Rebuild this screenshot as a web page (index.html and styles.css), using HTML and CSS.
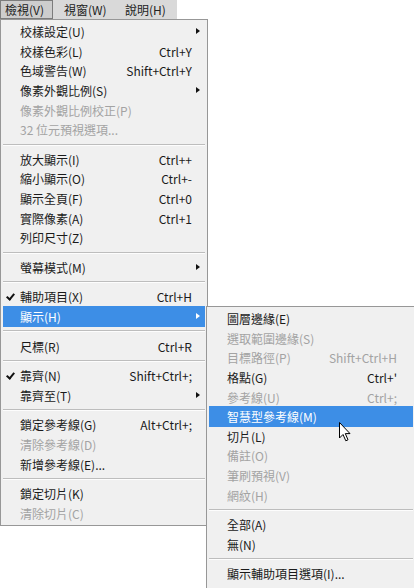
FILE: index.html
```html
<!DOCTYPE html>
<html>
<head>
  <title>檢視選單</title>
  <link rel="stylesheet" href="styles.css">
</head>
<body>
  <div class="menubar">
    <div class="bar-item active">檢視(V)</div>
    <div class="bar-item">視窗(W)</div>
    <div class="bar-item">說明(H)</div>
  </div>

  <div class="menu main-menu">
    <div class="row"><span class="mark"></span><span class="label">校樣設定(U)</span><span class="key"></span><span class="arrow"></span></div>
    <div class="row"><span class="mark"></span><span class="label">校樣色彩(L)</span><span class="key">Ctrl+Y</span><span class="arrow none"></span></div>
    <div class="row"><span class="mark"></span><span class="label">色域警告(W)</span><span class="key">Shift+Ctrl+Y</span><span class="arrow none"></span></div>
    <div class="row"><span class="mark"></span><span class="label">像素外觀比例(S)</span><span class="key"></span><span class="arrow"></span></div>
    <div class="row disabled"><span class="mark"></span><span class="label">像素外觀比例校正(P)</span><span class="key"></span><span class="arrow none"></span></div>
    <div class="row disabled"><span class="mark"></span><span class="label">32 位元預視選項...</span><span class="key"></span><span class="arrow none"></span></div>
    <div class="sep"></div>
    <div class="row"><span class="mark"></span><span class="label">放大顯示(I)</span><span class="key">Ctrl++</span><span class="arrow none"></span></div>
    <div class="row"><span class="mark"></span><span class="label">縮小顯示(O)</span><span class="key">Ctrl+-</span><span class="arrow none"></span></div>
    <div class="row"><span class="mark"></span><span class="label">顯示全頁(F)</span><span class="key">Ctrl+0</span><span class="arrow none"></span></div>
    <div class="row"><span class="mark"></span><span class="label">實際像素(A)</span><span class="key">Ctrl+1</span><span class="arrow none"></span></div>
    <div class="row"><span class="mark"></span><span class="label">列印尺寸(Z)</span><span class="key"></span><span class="arrow none"></span></div>
    <div class="sep"></div>
    <div class="row"><span class="mark"></span><span class="label">螢幕模式(M)</span><span class="key"></span><span class="arrow"></span></div>
    <div class="sep"></div>
    <div class="row"><span class="mark checked"></span><span class="label">輔助項目(X)</span><span class="key">Ctrl+H</span><span class="arrow none"></span></div>
    <div class="row hover"><span class="mark"></span><span class="label">顯示(H)</span><span class="key"></span><span class="arrow"></span></div>
    <div class="sep"></div>
    <div class="row"><span class="mark"></span><span class="label">尺標(R)</span><span class="key">Ctrl+R</span><span class="arrow none"></span></div>
    <div class="sep"></div>
    <div class="row"><span class="mark checked"></span><span class="label">靠齊(N)</span><span class="key">Shift+Ctrl+;</span><span class="arrow none"></span></div>
    <div class="row"><span class="mark"></span><span class="label">靠齊至(T)</span><span class="key"></span><span class="arrow"></span></div>
    <div class="sep"></div>
    <div class="row"><span class="mark"></span><span class="label">鎖定參考線(G)</span><span class="key">Alt+Ctrl+;</span><span class="arrow none"></span></div>
    <div class="row disabled"><span class="mark"></span><span class="label">清除參考線(D)</span><span class="key"></span><span class="arrow none"></span></div>
    <div class="row"><span class="mark"></span><span class="label">新增參考線(E)...</span><span class="key"></span><span class="arrow none"></span></div>
    <div class="sep"></div>
    <div class="row"><span class="mark"></span><span class="label">鎖定切片(K)</span><span class="key"></span><span class="arrow none"></span></div>
    <div class="row disabled"><span class="mark"></span><span class="label">清除切片(C)</span><span class="key"></span><span class="arrow none"></span></div>
  </div>

  <div class="menu sub-menu">
    <div class="row"><span class="mark"></span><span class="label">圖層邊緣(E)</span><span class="key"></span></div>
    <div class="row disabled"><span class="mark"></span><span class="label">選取範圍邊緣(S)</span><span class="key"></span></div>
    <div class="row disabled"><span class="mark"></span><span class="label">目標路徑(P)</span><span class="key">Shift+Ctrl+H</span></div>
    <div class="row"><span class="mark"></span><span class="label">格點(G)</span><span class="key">Ctrl+'</span></div>
    <div class="row disabled"><span class="mark"></span><span class="label">參考線(U)</span><span class="key">Ctrl+;</span></div>
    <div class="row hover"><span class="mark"></span><span class="label">智慧型參考線(M)</span><span class="key"></span></div>
    <div class="row"><span class="mark"></span><span class="label">切片(L)</span><span class="key"></span></div>
    <div class="row disabled"><span class="mark"></span><span class="label">備註(O)</span><span class="key"></span></div>
    <div class="row disabled"><span class="mark"></span><span class="label">筆刷預視(V)</span><span class="key"></span></div>
    <div class="row disabled"><span class="mark"></span><span class="label">網紋(H)</span><span class="key"></span></div>
    <div class="sep"></div>
    <div class="row"><span class="mark"></span><span class="label">全部(A)</span><span class="key"></span></div>
    <div class="row"><span class="mark"></span><span class="label">無(N)</span><span class="key"></span></div>
    <div class="sep"></div>
    <div class="row"><span class="mark"></span><span class="label">顯示輔助項目選項(I)...</span><span class="key"></span></div>
  </div>

  <svg class="cursor" width="14" height="22" viewBox="0 0 14 22">
    <path d="M1.5 1.5 L1.5 17 L5 13.5 L7.8 19.8 L10 18.8 L7.3 12.6 L12 12.6 Z" fill="#fff" stroke="#000" stroke-width="1" stroke-linejoin="miter"/>
  </svg>
</body>
</html>
```

FILE: styles.css
```css
body {
  margin: 0;
  width: 414px;
  height: 588px;
  overflow: hidden;
  position: relative;
  background-color: #fff;
  font-family: "Noto Sans CJK TC", "Noto Sans", sans-serif;
  font-size: 12px;
  color: #1a1a1a;
}

.menubar {
  display: flex;
  width: 177px;
  height: 19px;
  background-color: #d9d9d9;
}

.bar-item {
  box-sizing: border-box;
  line-height: 17px;
  width: 61px;
  padding-left: 10px;
  white-space: nowrap;
  border: 1px solid transparent;
  color: #222;
}

.bar-item.active {
  width: 53px;
  padding-left: 4px;
  border-color: #7c7c7c;
  background-color: #cdcdcd;
}

.bar-item:last-child {
  width: 63px;
}

.menu {
  box-sizing: border-box;
  background-color: #f0f0f0;
  border: 1px solid #979797;
  padding: 2px 0;
}

.main-menu {
  width: 208px;
}

.sub-menu {
  position: absolute;
  left: 206px;
  top: 306px;
  width: 210px;
  height: 300px;
}

.row {
  display: flex;
  align-items: center;
  height: 19.6px;
  margin: 0 2px;
  white-space: nowrap;
}

.mark {
  width: 17px;
  flex: none;
  height: 100%;
  position: relative;
}

.mark.checked::after {
  content: "";
  position: absolute;
  left: 5px;
  top: 5px;
  width: 3px;
  height: 6px;
  border: solid #111;
  border-width: 0 2px 2px 0;
  transform: rotate(40deg);
}

.label {
  flex: 1;
}

.key {
  text-align: right;
}

.main-menu .key {
  margin-right: 3px;
}

.sub-menu .row {
  padding-left: 1px;
}

.sub-menu .key {
  margin-right: 16px;
}

.arrow {
  width: 10px;
  height: 7px;
  flex: none;
  position: relative;
}

.arrow::after {
  content: "";
  position: absolute;
  left: 1px;
  top: 0;
  border-left: 4px solid #111;
  border-top: 3.5px solid transparent;
  border-bottom: 3.5px solid transparent;
}

.arrow.none::after {
  display: none;
}

.disabled {
  color: #a3a3a3;
}

.hover {
  background-color: #3d8ee6;
  color: #fff;
  height: 21px;
  margin-top: -0.7px;
  margin-bottom: -0.7px;
}

.hover .arrow::after {
  border-left-color: #fff;
}

.sep {
  height: 10px;
  margin: 0 2px;
  position: relative;
}

.sep::after {
  content: "";
  position: absolute;
  left: 0;
  right: 0;
  top: 4px;
  border-top: 1px solid #bdbdbd;
  border-bottom: 1px solid #fdfdfd;
}

.cursor {
  position: absolute;
  left: 338px;
  top: 421px;
}
```
